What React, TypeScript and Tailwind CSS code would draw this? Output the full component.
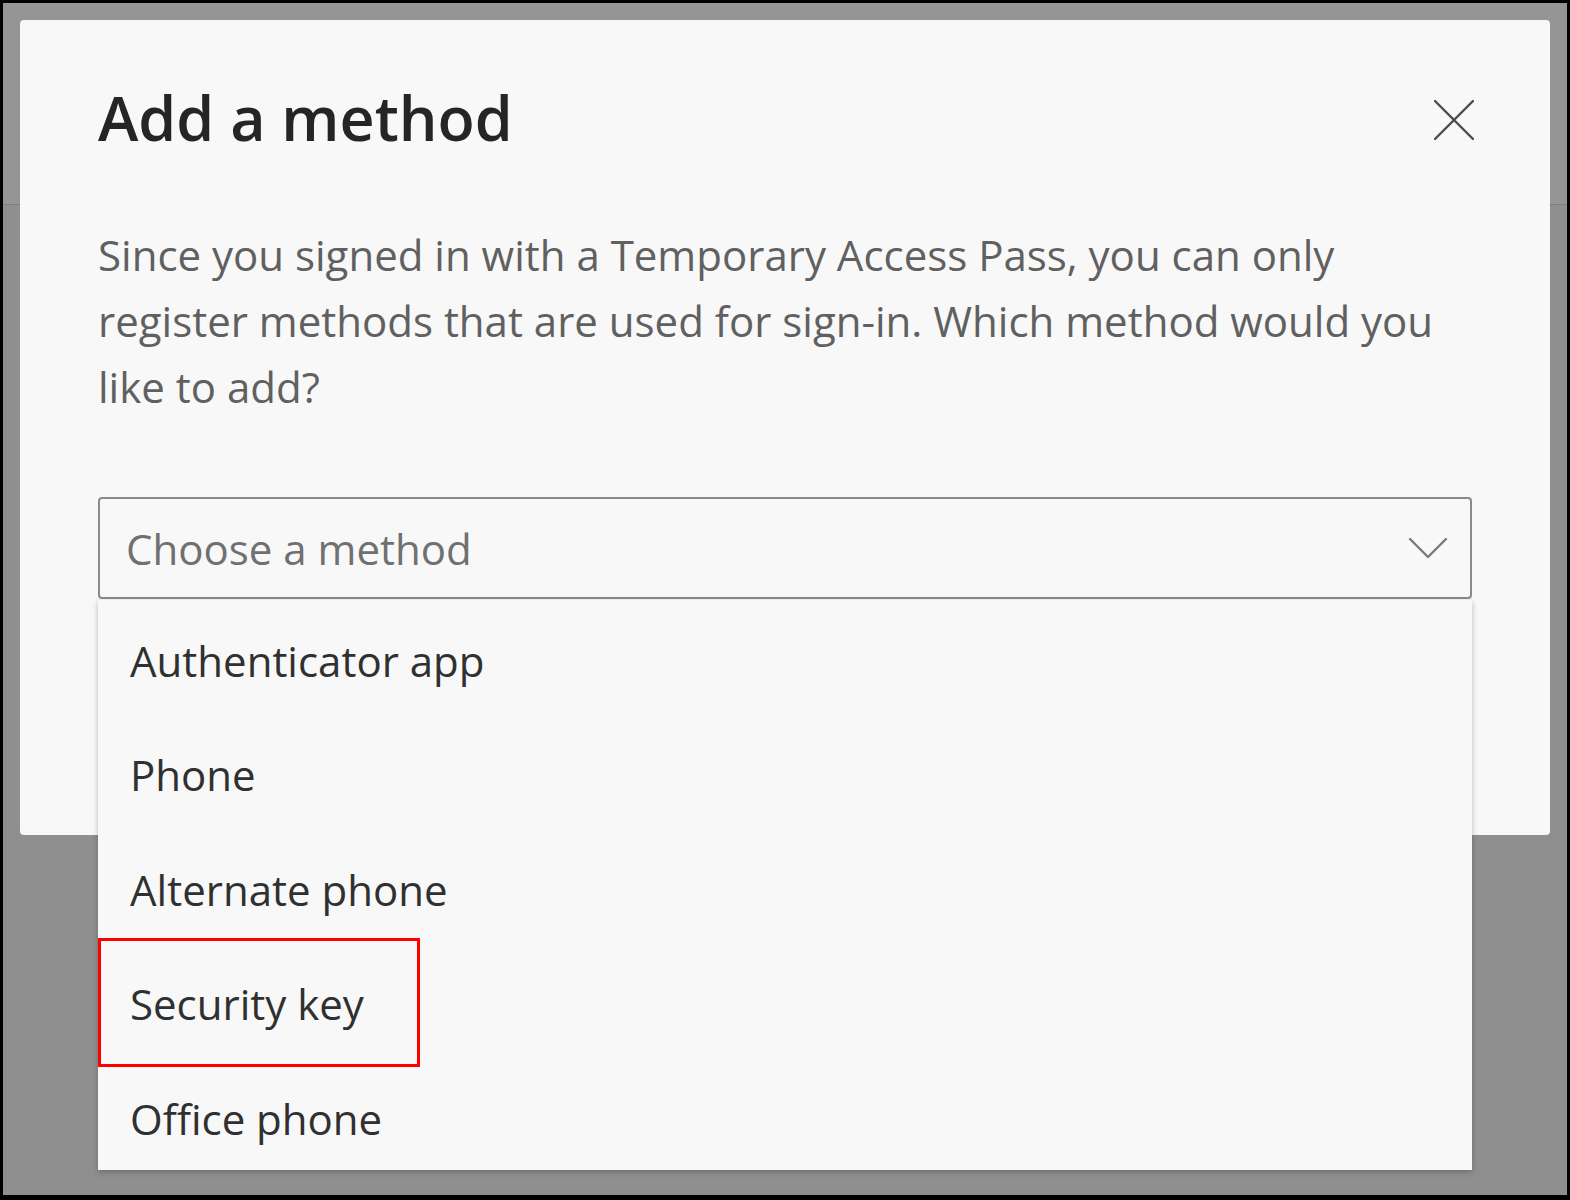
import React from "react";

const METHODS = [
  "Authenticator app",
  "Phone",
  "Alternate phone",
  "Security key",
  "Office phone",
];

export default function App() {
  return (
    <div className="w-[1570px] h-[1200px] bg-black p-[3px] pb-[5px] font-['Open_Sans',sans-serif]">
      <div className="relative w-full h-full bg-[#8f8f8f] overflow-hidden">
        {/* backdrop band */}
        <div className="h-[202px] bg-[#959595] border-b border-[#7d7d7d]" />

        {/* Dialog */}
        <div className="absolute left-[17px] top-[17px] w-[1530px] h-[815px] rounded-[4px] bg-[#f8f8f8] px-[78px] pt-[68px]">
          <div className="flex items-start justify-between">
            <h1 className="text-[61px] leading-[60px] font-semibold text-[#252525]">
              Add a method
            </h1>
            <button className="mt-[12px] mr-[-2px] text-[#4a4a4a]">
              <svg width="40" height="40" viewBox="0 0 40 40" fill="none" stroke="currentColor" strokeWidth="2.4" strokeLinecap="round">
                <path d="M1 1 L39 39 M39 1 L1 39" />
              </svg>
            </button>
          </div>

          <p className="mt-[74px] w-[1374px] text-[42px] leading-[66px] text-[#606060]">
            Since you signed in with a Temporary Access Pass, you can only register methods that are used for sign-in. Which method would you like to add?
          </p>

          <div className="mt-[77px] h-[102px] w-[1374px] rounded-[4px] border-2 border-[#8a8a8a] flex items-center justify-between pl-[26px] pr-[22px]">
            <span className="text-[42px] text-[#707070]">Choose a method</span>
            <svg width="40" height="24" viewBox="0 0 40 24" fill="none" stroke="#7a7a7a" strokeWidth="2.4" strokeLinecap="round" strokeLinejoin="round">
              <path d="M2 3 L20 21 L38 3" />
            </svg>
          </div>
        </div>

        {/* Dropdown menu */}
        <div className="absolute left-[95px] top-[597px] w-[1374px] h-[570px] overflow-hidden bg-[#f8f8f8] shadow-[0_2px_6px_rgba(0,0,0,0.25)] flex flex-col pt-[3px]">
          {METHODS.map((m) => (
            <div key={m} className="h-[114.5px] shrink-0 flex items-center pl-[32px]">
              <span className="text-[42px] text-[#303030]">{m}</span>
            </div>
          ))}
        </div>

        {/* Highlight box */}
        <div className="absolute left-[95px] top-[935px] w-[322px] h-[129px] border-[3px] border-[#ff0000]" />
      </div>
    </div>
  );
}
